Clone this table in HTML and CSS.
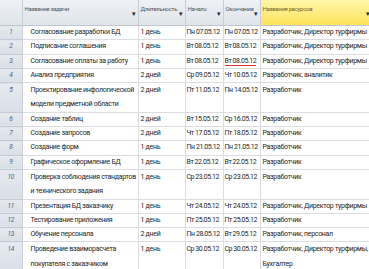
FILE: index.html
```html
<!DOCTYPE html>
<html lang="ru">
<head>
    <meta charset="UTF-8">
    <title>Задачи проекта</title>
    <link rel="stylesheet" href="styles.css">
</head>
<body>
    <table class="gantt">
        <colgroup>
            <col class="c-num">
            <col class="c-name">
            <col class="c-dur">
            <col class="c-start">
            <col class="c-end">
            <col class="c-res">
        </colgroup>
        <thead>
            <tr>
                <th class="num"></th>
                <th><span class="head">Название задачи</span><span class="arrow">&#9662;</span></th>
                <th><span class="head">Длительность</span><span class="arrow">&#9662;</span></th>
                <th><span class="head">Начало</span><span class="arrow">&#9662;</span></th>
                <th><span class="head">Окончание</span><span class="arrow">&#9662;</span></th>
                <th class="active"><span class="head">Названия ресурсов</span><span class="arrow">&#9662;</span></th>
            </tr>
        </thead>
        <tbody>
            <tr><td class="num">1</td><td class="name">Согласование разработки БД</td><td>1 день</td><td class="date">Пн 07.05.12</td><td class="date">Пн 07.05.12</td><td class="res">Разработчик, Директор турфирмы</td></tr>
            <tr><td class="num">2</td><td class="name">Подписание соглашения</td><td>1 день</td><td class="date">Вт 08.05.12</td><td class="date">Вт 08.05.12</td><td class="res">Разработчик, Директор турфирмы</td></tr>
            <tr><td class="num">3</td><td class="name">Согласование оплаты за работу</td><td>1 день</td><td class="date">Вт 08.05.12</td><td class="date"><span class="spell">Вт 08.05.12</span></td><td class="res">Разработчик, Директор турфирмы</td></tr>
            <tr><td class="num">4</td><td class="name">Анализ предприятия</td><td>2 дней</td><td class="date">Ср 09.05.12</td><td class="date">Чт 10.05.12</td><td class="res">Разработчик, аналитик</td></tr>
            <tr class="tall"><td class="num">5</td><td class="name">Проектирование инфологической<br>модели предметной области</td><td>2 дней</td><td class="date">Пт 11.05.12</td><td class="date">Пн 14.05.12</td><td class="res">Разработчик</td></tr>
            <tr><td class="num">6</td><td class="name">Создание таблиц</td><td>2 дней</td><td class="date">Вт 15.05.12</td><td class="date">Ср 16.05.12</td><td class="res">Разработчик</td></tr>
            <tr><td class="num">7</td><td class="name">Создание запросов</td><td>2 дней</td><td class="date">Чт 17.05.12</td><td class="date">Пт 18.05.12</td><td class="res">Разработчик</td></tr>
            <tr><td class="num">8</td><td class="name">Создание форм</td><td>1 день</td><td class="date">Пн 21.05.12</td><td class="date">Пн 21.05.12</td><td class="res">Разработчик</td></tr>
            <tr><td class="num">9</td><td class="name">Графическое оформление БД</td><td>1 день</td><td class="date">Вт 22.05.12</td><td class="date">Вт 22.05.12</td><td class="res">Разработчик</td></tr>
            <tr class="tall"><td class="num">10</td><td class="name">Проверка соблюдения стандартов<br>и технического задания</td><td>1 день</td><td class="date">Ср 23.05.12</td><td class="date">Ср 23.05.12</td><td class="res">Разработчик</td></tr>
            <tr><td class="num">11</td><td class="name">Презентация БД заказчику</td><td>1 день</td><td class="date">Чт 24.05.12</td><td class="date">Чт 24.05.12</td><td class="res">Разработчик, Директор турфирмы</td></tr>
            <tr><td class="num">12</td><td class="name">Тестирование приложения</td><td>1 день</td><td class="date">Пт 25.05.12</td><td class="date">Пт 25.05.12</td><td class="res">Разработчик</td></tr>
            <tr><td class="num">13</td><td class="name">Обучение персонала</td><td>2 дней</td><td class="date">Пн 28.05.12</td><td class="date">Вт 29.05.12</td><td class="res">Разработчик, персонал</td></tr>
            <tr class="tall"><td class="num">14</td><td class="name">Проведение взаиморасчета<br>покупателя с заказчиком</td><td>1 день</td><td class="date">Ср 30.05.12</td><td class="date">Ср 30.05.12</td><td class="res">Разработчик, Директор турфирмы,<br>Бухгалтер</td></tr>
        </tbody>
    </table>
</body>
</html>
```

FILE: styles.css
```css
body {
    margin: 0;
    background-color: #ffffff;
    font-family: Roboto, 'Liberation Sans', sans-serif;
    overflow: hidden;
}

.gantt {
    border-collapse: collapse;
    table-layout: fixed;
    width: 372px;
    font-size: 7px;
    letter-spacing: -0.3px;
    color: #262626;
}

.c-num { width: 22px; }
.c-name { width: 116px; }
.c-dur { width: 47px; }
.c-start { width: 38px; }
.c-end { width: 37px; }
.c-res { width: 112px; }

.gantt th {
    height: 25px;
    padding: 0;
    background: linear-gradient(#eef1f5, #dfe4ea);
    border-right: 1px solid #c9ced6;
    border-bottom: 1px solid #bfc5ce;
    text-align: left;
    vertical-align: top;
    position: relative;
    font-weight: normal;
}

.gantt th .head {
    display: block;
    width: calc(100% - 8px);
    padding: 5px 0 0 2px;
    font-size: 6px;
    line-height: 8px;
    color: #4b5767;
    white-space: nowrap;
    overflow: hidden;
}

.gantt th .arrow {
    position: absolute;
    right: 2px;
    top: 10px;
    font-size: 7px;
    line-height: 8px;
    color: #222;
}

.gantt th.active {
    background: linear-gradient(#fff6a8, #fbe25a);
    border-right: none;
}

.gantt th.active .head {
    color: #6f6330;
}

.gantt td {
    height: 13.3px;
    padding: 0 0 0 2px;
    border-right: 1px solid #dcdde0;
    border-bottom: 1px solid #dcdde0;
    white-space: nowrap;
    vertical-align: top;
    line-height: 13.3px;
    overflow: hidden;
}

.gantt tr.tall td {
    height: 27.6px;
    line-height: 14.3px;
}

.gantt td.name {
    padding-left: 8px;
}

.gantt td.date {
    padding-left: 1px;
    letter-spacing: -0.45px;
}

.gantt td.num {
    background: linear-gradient(#e6eaf0, #d9dfe7);
    border-right: 1px solid #c9ced6;
    border-bottom: 1px solid #c4cad3;
    text-align: center;
    padding: 0;
    color: #55606e;
    font-style: italic;
    font-size: 6.5px;
}

.spell {
    border-bottom: 1px solid #e0302a;
}
```
